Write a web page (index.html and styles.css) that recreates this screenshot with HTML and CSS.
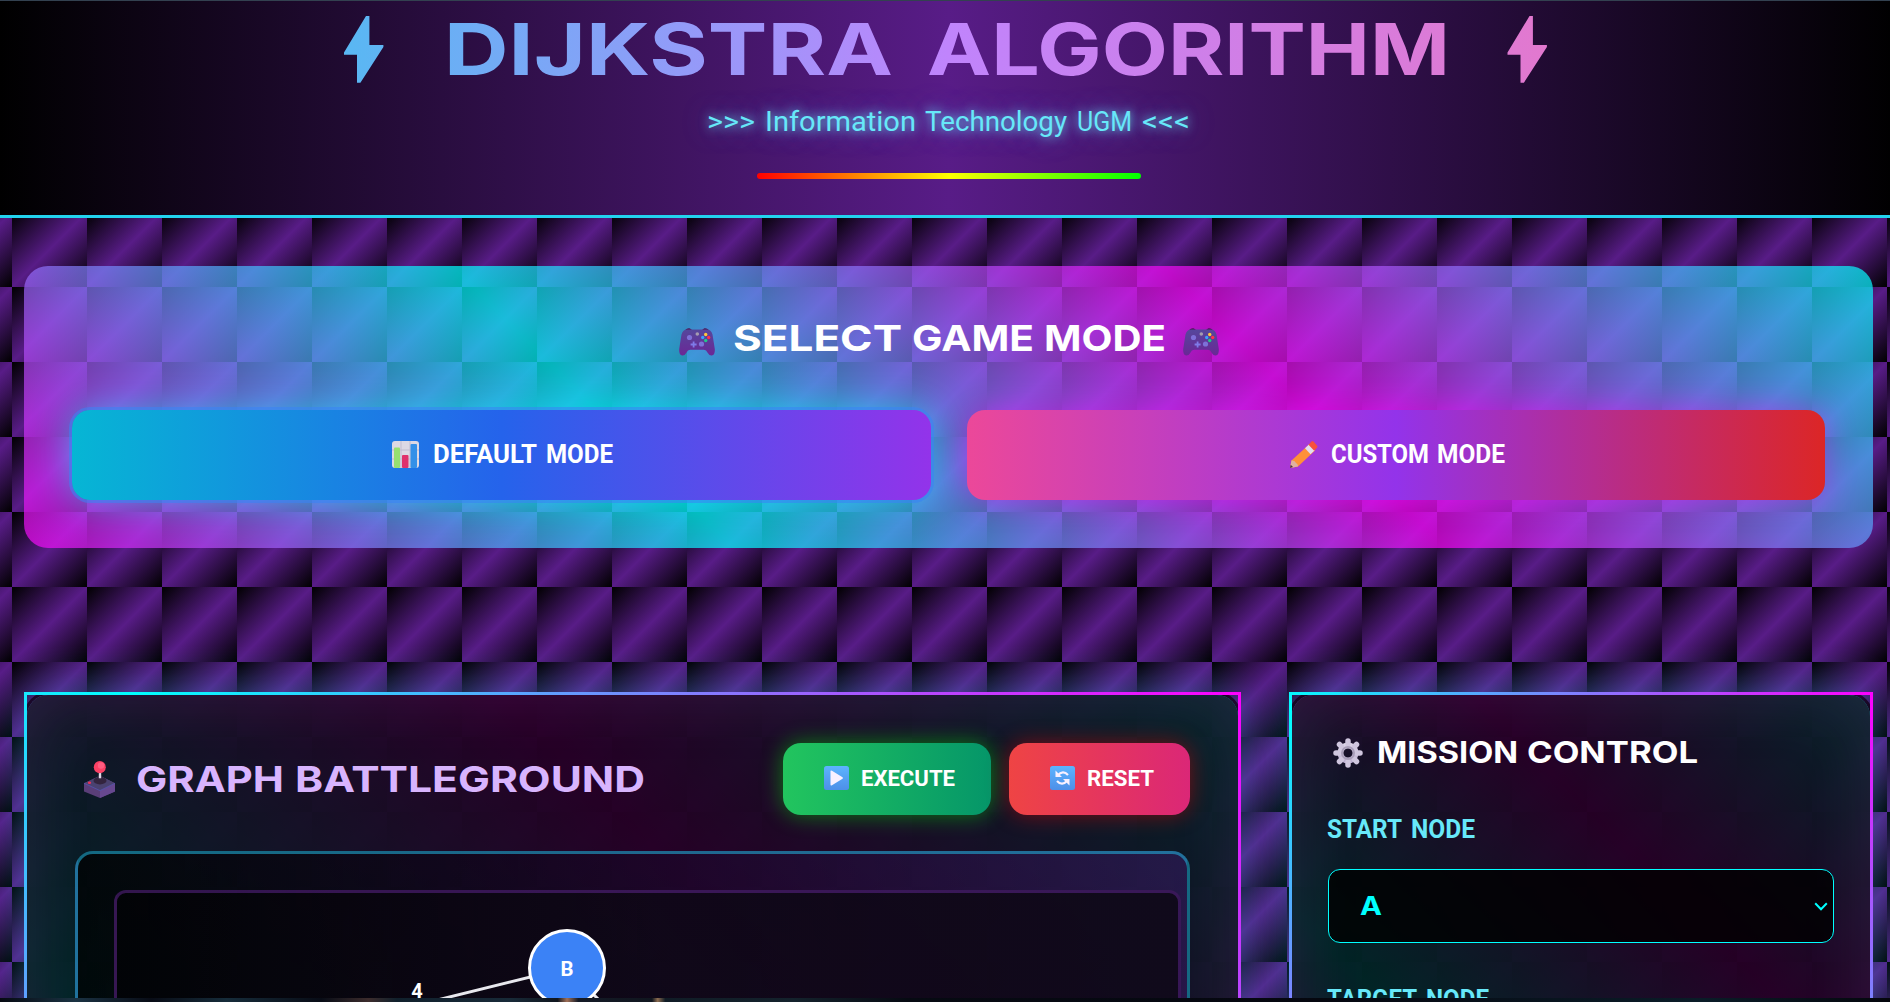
FILE: index.html
```html
<!DOCTYPE html>
<html lang="en">
<head>
<meta charset="utf-8">
<title>Dijkstra Algorithm</title>
<link rel="stylesheet" href="styles.css">
</head>
<body>
<header class="hero">
  <h1 class="hero-title">
    <svg width="1849" height="80">
      <defs>
        <linearGradient id="titleGrad" gradientUnits="userSpaceOnUse" x1="0" y1="0" x2="1849" y2="0">
          <stop offset="0" stop-color="#22d3ee"/><stop offset=".5" stop-color="#c084fc"/><stop offset="1" stop-color="#f472b6"/>
        </linearGradient>
      </defs>
      <g fill="url(#titleGrad)">
        <path d="M342 4h3.400v29h14v2L336.400 70.700h-3.400v-28h-13v-2.200z"/>
        <text class="display" x="420" y="63" font-size="71.500" textLength="449" lengthAdjust="spacingAndGlyphs">DIJKSTRA</text>
        <text class="display" x="903" y="63" font-size="71.500" textLength="523" lengthAdjust="spacingAndGlyphs">ALGORITHM</text>
        <path d="M1505.500 4h3.400v29h14v2L1499.900 70.700h-3.400v-28h-13v-2.200z"/>
      </g>
    </svg>
  </h1>
  <p class="tagline"><svg width="484" height="30">
    <g class="label medium" font-size="27">
      <text x="0" y="24" textLength="48" lengthAdjust="spacingAndGlyphs">&gt;&gt;&gt;</text>
      <text x="58" y="24" textLength="151" lengthAdjust="spacingAndGlyphs">Information</text>
      <text x="218" y="24" textLength="142" lengthAdjust="spacingAndGlyphs">Technology</text>
      <text x="370" y="24" textLength="55" lengthAdjust="spacingAndGlyphs">UGM</text>
      <text x="435" y="24" textLength="48" lengthAdjust="spacingAndGlyphs">&lt;&lt;&lt;</text>
    </g>
  </svg></p>
  <div class="rainbow"></div>
</header>

<svg class="defs" width="0" height="0">
  <defs>
    <linearGradient id="padGrad" x1="0" y1="0" x2="0" y2="1"><stop offset="0" stop-color="#55479c"/><stop offset="1" stop-color="#6b2796"/></linearGradient>
    <linearGradient id="gearGrad" x1="0" y1="0" x2="0" y2="1"><stop offset="0" stop-color="#e2dcec"/><stop offset="1" stop-color="#b6a8cc"/></linearGradient>
    <linearGradient id="blueGrad" x1="0" y1="0" x2="0" y2="1"><stop offset="0" stop-color="#5cb4ff"/><stop offset="1" stop-color="#4d8fe8"/></linearGradient>
    <symbol id="pad" viewBox="0 0 36 28">
      <path d="M6 3q1-3 5-2.600L13 2zM30 3q-1-3-5-2.600L23 2z" fill="#4a1250"/>
      <path d="M8 1.500h20q4 0 5.500 5l2.300 14.500q.4 6-3 6.500-2.300.3-4-2.500-1.500-3.200-4-3.200H11.200q-2.500 0-4 3.200-1.700 2.800-4 2.500-3.400-.5-3-6.500L2.500 6.500Q4 1.500 8 1.500z" fill="url(#padGrad)"/>
      <circle cx="10.500" cy="9.500" r="2.600" fill="#7e70d8"/><circle cx="22.500" cy="16" r="2.600" fill="#7e70d8"/>
      <path d="M13.700 13.500h1.800v2.100h2.100v1.800h-2.100v2.100h-1.800v-2.100h-2.100v-1.800h2.100z" fill="#7f7be8"/>
      <circle cx="18.300" cy="6" r="1.800" fill="#a59bb0"/>
      <circle cx="26.700" cy="6.500" r="1.700" fill="#ffc83d"/><circle cx="26.700" cy="12.500" r="1.700" fill="#20c98a"/><circle cx="23.700" cy="9.500" r="1.700" fill="#3aa0ff"/><circle cx="29.700" cy="9.500" r="1.700" fill="#ff2f4a"/>
    </symbol>
  </defs>
</svg>

<main class="page">
  <section class="mode-panel">
    <h2 class="mode-heading">
      <svg class="pad" width="36" height="28"><use href="#pad"/></svg>
      <svg width="434" height="36">
        <g class="display" font-size="36">
          <text x="1" y="31" textLength="169" lengthAdjust="spacingAndGlyphs">SELECT</text>
          <text x="180" y="31" textLength="122" lengthAdjust="spacingAndGlyphs">GAME</text>
          <text x="312" y="31" textLength="122" lengthAdjust="spacingAndGlyphs">MODE</text>
        </g>
      </svg>
      <svg class="pad" width="36" height="28"><use href="#pad"/></svg>
    </h2>
    <div class="mode-grid">
      <button class="mode-btn mode-default">
        <svg width="28" height="27" viewBox="0 0 28 27"><rect width="27" height="27" rx="3" fill="#dcd8e4"/><path d="M0 9h27M0 18h27M9 0v27M18 0v27" stroke="#c2bccf" stroke-width="1"/><rect x="2" y="6.500" width="6" height="20.500" rx="1" fill="#96e070"/><rect x="10" y="14" width="6.500" height="13" rx="1" fill="#e0306c"/><rect x="18.500" y="3" width="6.500" height="24" rx="1" fill="#3490e8"/></svg>
        <svg width="180" height="26">
          <g class="label" font-size="25.500">
            <text x="0" y="22" textLength="104" lengthAdjust="spacingAndGlyphs">DEFAULT</text>
            <text x="113" y="22" textLength="67" lengthAdjust="spacingAndGlyphs">MODE</text>
          </g>
        </svg>
      </button>
      <button class="mode-btn mode-custom">
        <svg width="28" height="27" viewBox="0 0 28 27"><path d="M0 27l1.500-7.500L19 3.500l6 6L8 25.500z" fill="#ff9038"/><path d="M0 27l1.500-7.500Q5 19 6 22q2 .5 2 3.500z" fill="#e0b0a0"/><path d="M0 27l.7-3.300 2.300 2.400z" fill="#4a2a48"/><path d="M15 7.200l4.500-4.200 5.500 6-4.500 4.300z" fill="#e4dcf0"/><path d="M18.500 3.800L21.500.6q1-1 2 0l3.500 4q1 1.200 0 2.200l-2.800 3z" fill="#f8503c"/></svg>
        <svg width="174" height="26">
          <g class="label" font-size="25.500">
            <text x="0" y="22" textLength="98" lengthAdjust="spacingAndGlyphs">CUSTOM</text>
            <text x="106" y="22" textLength="68" lengthAdjust="spacingAndGlyphs">MODE</text>
          </g>
        </svg>
      </button>
    </div>
  </section>

  <div class="columns">
    <section class="card card-graph">
      <div class="card-head">
        <h2 class="graph-heading">
          <svg width="31" height="37" viewBox="0 1 31 45" preserveAspectRatio="none"><path d="M0 28l16-9 15 9v10l-15 8-16-8z" fill="#5a3e78"/><path d="M16 36l15-8v10l-15 8z" fill="#674890"/><path d="M0 28l16-9 15 9-15 9z" fill="#4a4270"/><path d="M0 28l16 9 15-9" fill="none" stroke="#5354a8"/><ellipse cx="16" cy="25" rx="6.500" ry="4.500" fill="#33243e"/><path d="M12 24q2-6 4-6t4 6z" fill="#33243e"/><path d="M14.800 14h2.400v8h-2.400z" fill="#ddd6e6"/><ellipse cx="15.800" cy="8.500" rx="6" ry="7.500" fill="#fa4064"/><ellipse cx="17" cy="6.500" rx="3.200" ry="4" fill="#ff5c80"/><circle cx="5.500" cy="27.500" r="1.600" fill="#f03058"/></svg>
          <svg width="508" height="36">
            <g class="display" font-size="36">
              <text x="-1" y="31" textLength="148" lengthAdjust="spacingAndGlyphs">GRAPH</text>
              <text x="158" y="31" textLength="350" lengthAdjust="spacingAndGlyphs">BATTLEGROUND</text>
            </g>
          </svg>
        </h2>
        <div class="actions">
          <button class="action execute">
            <svg width="25" height="24" viewBox="0 0 25 24"><rect width="25" height="24" rx="2.500" fill="url(#blueGrad)"/><path d="M6.500 5.500v13q0 1.500 1.500.7l10.500-6.400q1-.7 0-1.500L8 4.800q-1.500-.8-1.500.7z" fill="#f8f0ff"/></svg>
            <svg width="94" height="22"><text class="label" x="0" y="19" font-size="21.500" textLength="94" lengthAdjust="spacingAndGlyphs">EXECUTE</text></svg>
          </button>
          <button class="action reset">
            <svg width="25" height="24" viewBox="0 0 25 24"><rect width="25" height="24" rx="2.500" fill="url(#blueGrad)"/><path d="M7.500 9.500Q13 3.500 18 9M17.500 14.500Q12 20.500 7 15" fill="none" stroke="#f8f0ff" stroke-width="2.200"/><path d="M5.500 4.500v6.500h6.500zM19.500 19.500v-6.500h-6.500z" fill="#f8f0ff"/></svg>
            <svg width="67" height="22"><text class="label" x="0" y="19" font-size="21.500" textLength="67" lengthAdjust="spacingAndGlyphs">RESET</text></svg>
          </button>
        </div>
      </div>
      <div class="graph-frame">
        <div class="graph-canvas">
          <svg width="1061" height="500">
            <g stroke="#e8e8ee" stroke-width="3"><path d="M450 75L150 149M450 75L750 375"/></g>
            <circle cx="450" cy="75" r="37.500" fill="#3b82f6" stroke="#fff" stroke-width="3"/>
            <text class="label" x="450" y="83" font-size="21" text-anchor="middle" textLength="13" lengthAdjust="spacingAndGlyphs">B</text>
            <text class="label" x="300" y="105" font-size="20" text-anchor="middle">4</text>
          </svg>
        </div>
      </div>
    </section>

    <aside class="card card-control">
      <h2 class="control-heading">
        <svg width="30" height="30" viewBox="-15 -15 30 30"><g fill="url(#gearGrad)"><path fill-rule="evenodd" d="M-10.500 0a10.500 10.500 0 1 0 21 0a10.500 10.500 0 1 0-21 0zM-4.600 0a4.600 4.600 0 1 1 9.200 0a4.600 4.600 0 1 1-9.200 0z"/></g><g stroke="#cfc6de" stroke-width="5.500" stroke-linecap="round"><path d="M0-9v-3M0 9v3M-9 0h-3M9 0h3M-6.500-6.500l-2-2M6.500-6.500l2-2M-6.500 6.500l-2 2M6.500 6.500l2 2"/></g><circle r="6" fill="none" stroke="#a99fba" stroke-width="2"/></svg>
        <svg width="320" height="30">
          <g class="display" font-size="30.500">
            <text x="0" y="26" textLength="141" lengthAdjust="spacingAndGlyphs">MISSION</text>
            <text x="150" y="26" textLength="171" lengthAdjust="spacingAndGlyphs">CONTROL</text>
          </g>
        </svg>
      </h2>
      <div class="field">
        <svg class="field-label" width="147" height="24">
          <g class="label" font-size="25.500">
            <text x="-1" y="20" textLength="75" lengthAdjust="spacingAndGlyphs">START</text>
            <text x="83" y="20" textLength="64" lengthAdjust="spacingAndGlyphs">NODE</text>
          </g>
        </svg>
        <div class="select">
          <svg width="22" height="24"><text class="display" x="0" y="21" font-size="25.500" textLength="22" lengthAdjust="spacingAndGlyphs">A</text></svg>
          <svg width="14" height="9" viewBox="0 0 14 9"><path d="M1.200 1.200L7 7.200l5.800-6" fill="none" stroke="#0ff" stroke-width="2"/></svg>
        </div>
      </div>
      <div class="field">
        <svg class="field-label" width="161" height="24">
          <g class="label" font-size="25.500">
            <text x="-1" y="20" textLength="90" lengthAdjust="spacingAndGlyphs">TARGET</text>
            <text x="98" y="20" textLength="63" lengthAdjust="spacingAndGlyphs">NODE</text>
          </g>
        </svg>
      </div>
    </aside>
  </div>
</main>
<div class="desktop-edge"></div>
</body>
</html>
```
FILE: styles.css
```css
* { box-sizing: border-box; }

html { overflow: hidden; height: 1002px; }

body {
  margin: 0;
  width: 1897px;
  height: 1002px;
  overflow: hidden;
  font-family: Roboto, "Liberation Sans", sans-serif;
  color: #fff;
  background: #000 linear-gradient(135deg, #000, #581c87 50%, #000) 12px 62px / 75px 75px;
}

h1, h2, p { margin: 0; }
svg { display: block; flex: none; overflow: visible; }
.defs { position: absolute; }

.display { font-family: Inter, "DejaVu Sans", sans-serif; font-weight: 700; }
.label { font-family: Roboto, sans-serif; font-weight: 700; fill: currentColor; }
.medium { font-weight: 400; }
h2 .display, .select .display { fill: currentColor; }

/* Header */
.hero {
  height: 218px;
  padding: 11px 24px 0;
  border-top: 1px solid #334150;
  border-bottom: 3px solid #22d3ee;
  background: linear-gradient(90deg, #000, #581c87, #000);
}
.hero-title { height: 80px; }
.tagline {
  display: flex;
  justify-content: center;
  margin-top: 15px;
  height: 30px;
  color: #67e8f9;
  text-shadow: 0 0 10px #67e8f9, 0 0 25px rgba(103, 132, 249, .7);
}
.rainbow {
  width: 384px;
  height: 6px;
  margin: 36px auto 0;
  border-radius: 3px;
  background: linear-gradient(90deg, #f00, #ff0, #0f0);
}

/* Mode selector */
.page { padding: 48px 24px 0; }
.mode-panel {
  height: 282px;
  padding: 0 48px;
  border-radius: 24px;
  background: linear-gradient(45deg, rgba(245, 8, 245, .7), rgba(0, 255, 255, .7), rgba(245, 8, 245, .7), rgba(0, 255, 255, .7));
}
.mode-heading {
  display: flex;
  justify-content: center;
  gap: 17px;
  height: 144px;
  padding-top: 54px;
}
.pad { margin-top: 8px; }
.mode-grid { display: grid; grid-template-columns: 1fr 1fr; gap: 36px; height: 90px; }
button { border: 0; color: #fff; display: flex; align-items: center; justify-content: center; }
.mode-btn { gap: 13px; border-radius: 18px; padding: 0 0 2px 3px; }
.mode-default {
  background: linear-gradient(90deg, #06b6d4, #2563eb, #9333ea);
  box-shadow: 0 0 0 3px rgba(59, 130, 246, .55), 0 0 36px rgba(0, 255, 255, .5);
}
.mode-custom {
  background: linear-gradient(90deg, #ec4899, #9333ea, #dc2626);
  box-shadow: 0 0 30px rgba(255, 0, 255, .4);
}

/* Cards */
.columns {
  display: grid;
  grid-template-columns: 1217px 584px;
  gap: 48px;
  align-items: start;
  margin-top: 144px;
}
.card {
  border: 3px solid transparent;
  border-image: linear-gradient(45deg, #f0f, #0ff, #f0f) 1;
  border-radius: 24px;
  background:
    linear-gradient(rgba(0, 0, 0, .8), rgba(0, 0, 0, .8)) padding-box,
    linear-gradient(45deg, rgba(255, 0, 255, .7), rgba(0, 255, 255, .7), rgba(255, 0, 255, .7), rgba(0, 255, 255, .7)) padding-box,
    rgba(0, 0, 0, .6);
  box-shadow: 0 0 50px rgba(0, 255, 255, .25), inset 0 0 70px rgba(255, 80, 255, .13);
}
.card-graph { height: 1005px; padding: 48px; }
.card-control { height: 616px; padding: 43px 36px 36px; }

.card-head { display: flex; justify-content: space-between; height: 72px; }
.graph-heading { display: flex; gap: 22px; padding: 18px 0 0 9px; color: #d8b4fe; }
.actions { display: flex; gap: 18px; }
.action { height: 72px; gap: 12px; padding: 0 0 3px 5px; border-radius: 18px; }
.execute {
  width: 208px;
  background: linear-gradient(90deg, #22c55e, #059669);
  box-shadow: 0 0 22px rgba(0, 255, 0, .45);
}
.reset {
  width: 181px;
  background: linear-gradient(90deg, #ef4444, #db2777);
  box-shadow: 0 0 22px rgba(255, 0, 0, .45);
}

.graph-frame {
  height: 700px;
  margin-top: 36px;
  padding: 36px;
  border: 3px solid rgba(34, 186, 228, .55);
  border-radius: 18px;
  background: linear-gradient(90deg, rgba(0, 0, 0, .72), rgba(12, 5, 26, .5) 40%, rgba(59, 26, 105, .5));
}
.graph-canvas {
  width: 1067px;
  height: 600px;
  border: 3px solid rgba(100, 40, 150, .5);
  border-radius: 12px;
  background: linear-gradient(90deg, rgba(2, 2, 5, .75), rgba(14, 8, 22, .85) 50%, rgba(13, 8, 20, .85));
}

.control-heading { display: flex; gap: 14px; height: 80px; padding-left: 5px; }
.control-heading svg + svg { margin-top: -1px; }
.field { height: 170px; }
.field-label { color: #67e8f9; }
.select {
  display: flex;
  align-items: center;
  justify-content: space-between;
  height: 74px;
  margin-top: 27px;
  padding: 0 5px 0 31px;
  border: 1px solid #0ff;
  border-radius: 12px;
  background: rgba(0, 0, 0, .8);
  color: #0ff;
}

/* Sliver of the desktop below the window */
.desktop-edge {
  position: fixed;
  inset: auto 0 0 0;
  height: 4px;
  background: linear-gradient(90deg, #060a12, #1a3242 4%, #080c16 8%, #162c3a 12%, #080c16 17%, #3c2c2c 19.500%, #10202c 21%, #182a38 27%, #10161f 29.500%, #a07058 30%, #141a26 30.600%, #10161f 34.500%, #8c6c50 34.800%, #101c26 35.200%, #14222c 42%, #060a12 48%, #05070f 70%, #0a1c28 90%, #04060c);
}
```
